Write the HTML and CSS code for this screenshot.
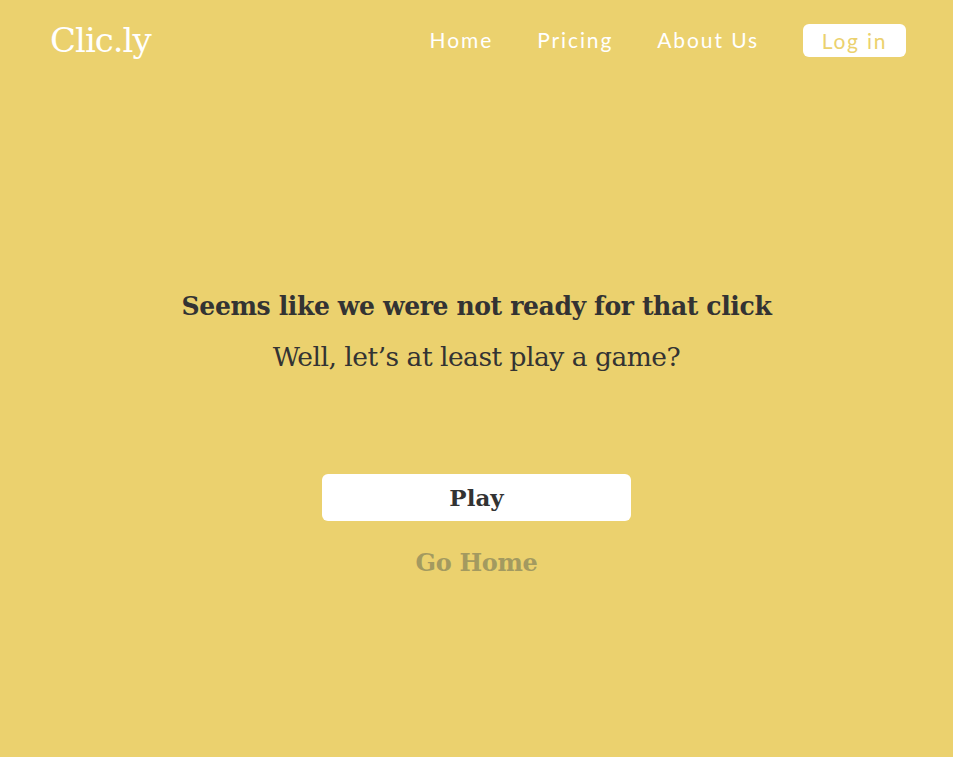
FILE: index.html
```html
<!DOCTYPE html>
<html lang="en">
<head>
<meta charset="utf-8">
<title>Clic.ly</title>
<link rel="stylesheet" href="styles.css">
</head>
<body>
<header class="header">
  <a class="logo" href="#">Clic.ly</a>
  <nav class="nav">
    <a class="nav-link" href="#">Home</a>
    <a class="nav-link" href="#">Pricing</a>
    <a class="nav-link" href="#">About Us</a>
    <a class="login" href="#">Log in</a>
  </nav>
</header>
<main class="main">
  <h1 class="title">Seems like we were not ready for that click</h1>
  <p class="subtitle">Well, let’s at least play a game?</p>
  <button class="play">Play</button>
  <a class="go-home" href="#">Go Home</a>
</main>
</body>
</html>
```
FILE: styles.css
```css
* { box-sizing: border-box; }
html, body { margin: 0; padding: 0; }
body {
  background: #ebd16e;
  width: 953px;
  height: 757px;
  overflow: hidden;
  font-family: "DejaVu Serif", serif;
  color: #333;
}
a { text-decoration: none; }
.header {
  display: flex;
  justify-content: space-between;
  align-items: flex-start;
  padding: 18px 47px 0 50px;
  height: 80px;
}
.logo {
  font-family: "DejaVu Serif", serif;
  font-size: 34px;
  color: #fff;
  line-height: 44px;
  letter-spacing: -1px;
}
.nav {
  display: flex;
  align-items: center;
  margin-top: 6px;
}
.nav-link {
  font-family: "Lato", sans-serif;
  font-size: 21px;
  color: #fff;
  margin-right: 44px;
  letter-spacing: 1.9px;
  margin-top: -2px;
}
.login {
  font-family: "Lato", sans-serif;
  font-size: 21px;
  color: #ebd16e;
  background: #fff;
  border-radius: 6px;
  width: 103px;
  height: 33px;
  display: flex;
  align-items: center;
  justify-content: center;
  letter-spacing: 1.8px;
}
.main {
  display: flex;
  flex-direction: column;
  align-items: center;
  padding-top: 208px;
}
.title {
  margin: 0;
  font-size: 25.1px;
  font-weight: bold;
  line-height: 36px;
  letter-spacing: -0.4px;
}
.subtitle {
  margin: 15px 0 0;
  font-size: 26.5px;
  line-height: 36px;
  letter-spacing: -0.5px;
}
.play {
  margin-top: 99px;
  width: 309px;
  height: 47px;
  border: none;
  border-radius: 6px;
  background: #fff;
  font-family: "DejaVu Serif", serif;
  font-weight: bold;
  font-size: 23px;
  color: #333;
}
.go-home {
  margin-top: 24px;
  font-size: 24px;
  font-weight: bold;
  color: #a39a60;
  line-height: 36px;
  letter-spacing: -0.3px;
}
```
